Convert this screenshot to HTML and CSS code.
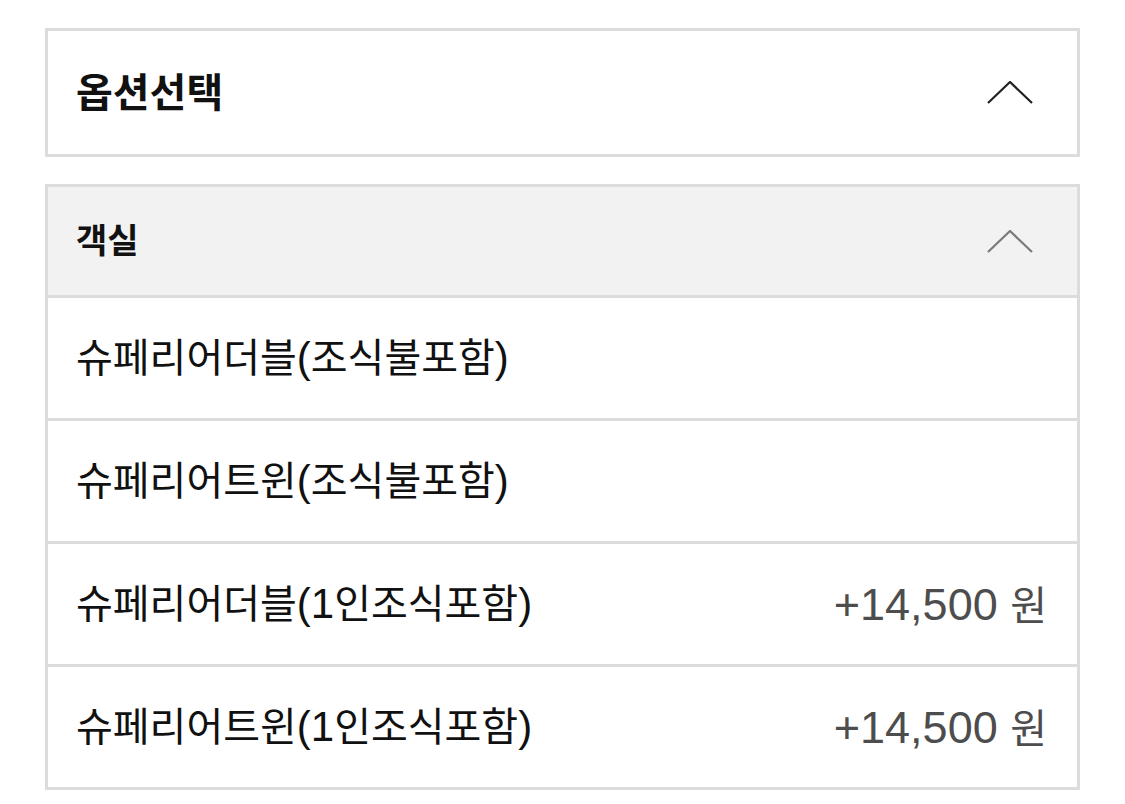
FILE: index.html
```html
<!DOCTYPE html>
<html lang="ko">
<head>
<meta charset="utf-8">
<title>옵션선택</title>
<link rel="stylesheet" href="styles.css">
</head>
<body>
<div class="page">
  <section class="card">
    <div class="select-head">
      <h2 class="select-title">옵션선택</h2>
      <svg class="chevron chevron-dark" viewBox="0 0 46 23" width="46" height="23" aria-hidden="true"><polyline points="1,22 23,1 45,22" /></svg>
    </div>
  </section>

  <section class="card">
    <div class="group-head">
      <h3 class="group-title">객실</h3>
      <svg class="chevron chevron-light" viewBox="0 0 46 23" width="46" height="23" aria-hidden="true"><polyline points="1,22 23,1 45,22" /></svg>
    </div>
    <ul class="opt-list">
      <li class="opt"><span class="opt-name">슈페리어더블<span class="lat">(</span>조식불포함<span class="lat">)</span></span></li>
      <li class="opt"><span class="opt-name">슈페리어트윈<span class="lat">(</span>조식불포함<span class="lat">)</span></span></li>
      <li class="opt"><span class="opt-name">슈페리어더블<span class="lat">(1</span>인조식포함<span class="lat">)</span></span><span class="opt-price"><span class="lat">+14,500 </span>원</span></li>
      <li class="opt"><span class="opt-name">슈페리어트윈<span class="lat">(1</span>인조식포함<span class="lat">)</span></span><span class="opt-price"><span class="lat">+14,500 </span>원</span></li>
    </ul>
  </section>
</div>
</body>
</html>
```

FILE: styles.css
```css
* {
  box-sizing: border-box;
}

html, body {
  margin: 0;
  padding: 0;
  background: #ffffff;
}

body {
  font-family: "Liberation Sans", "Noto Sans CJK KR", sans-serif;
  color: #111111;
}

.page {
  padding: 28px 45px 0 45px;
  display: flex;
  flex-direction: column;
  gap: 27px;
}

.card {
  border: 3px solid #dcdcdc;
  background: #ffffff;
}

.select-head {
  height: 123px;
  display: flex;
  align-items: center;
  justify-content: space-between;
  padding: 0 44px 0 28px;
}

.select-title {
  margin: 0;
  font-size: 40px;
  font-weight: 700;
  line-height: 1;
  color: #111111;
}

.group-head {
  height: 111px;
  display: flex;
  align-items: center;
  justify-content: space-between;
  padding: 0 44px 0 28px;
  background: #f2f2f2;
  border-bottom: 3px solid #dcdcdc;
}

.group-title {
  margin: 0;
  font-size: 34px;
  font-weight: 700;
  line-height: 1;
  color: #111111;
}

.chevron {
  display: block;
  fill: none;
  stroke-width: 2.2;
  stroke-linecap: butt;
  stroke-linejoin: miter;
}

.chevron-dark {
  stroke: #222222;
}

.chevron-light {
  stroke: #7a7a7a;
}

.opt-list {
  list-style: none;
  margin: 0;
  padding: 0;
}

.opt {
  height: 120px;
  display: flex;
  align-items: center;
  justify-content: space-between;
  padding: 0 30px 0 28px;
  font-size: 40px;
  line-height: 1;
}

.opt + .opt {
  height: 123px;
  border-top: 3px solid #dcdcdc;
}

.opt-name {
  color: #111111;
}

.opt-price {
  color: #4d4d4d;
}

.lat {
  font-family: "Liberation Sans", sans-serif;
  font-size: 42px;
}

.opt-price .lat {
  font-size: 45px;
}
```
